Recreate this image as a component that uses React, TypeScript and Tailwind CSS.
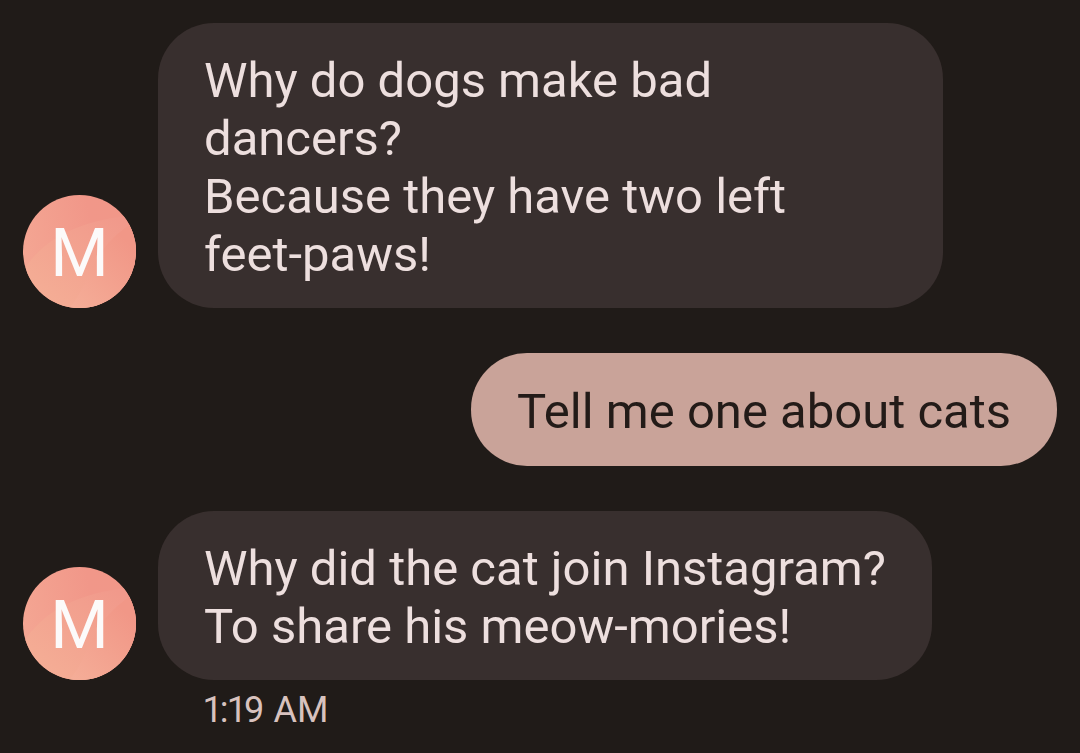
import React from "react";

type Message = { id: number; from: "them" | "me"; lines: string[]; time?: string };

const messages: Message[] = [
  { id: 1, from: "them", lines: ["Why do dogs make bad dancers?", "Because they have two left feet-paws!"] },
  { id: 2, from: "me", lines: ["Tell me one about cats"] },
  { id: 3, from: "them", lines: ["Why did the cat join Instagram?", "To share his meow-mories!"], time: "1:19 AM" },
];

// Hyphenated words stay whole, so lines break only at spaces.
function Line({ text }: { text: string }) {
  return (
    <p>
      {text.split(" ").map((word, i) => (
        <React.Fragment key={i}>
          {i > 0 && " "}
          {word.includes("-") ? <span className="whitespace-nowrap">{word}</span> : word}
        </React.Fragment>
      ))}
    </p>
  );
}

function Avatar({ id }: { id: number }) {
  const base = `avatar-base-${id}`;
  const swoop = `avatar-swoop-${id}`;
  const petal = `avatar-petal-${id}`;
  return (
    <div className="grid size-[113px] shrink-0 place-items-center overflow-hidden rounded-full">
      <svg viewBox="0 0 113 113" className="col-start-1 row-start-1 size-full" aria-hidden="true">
        <defs>
          <linearGradient id={base} x1="0" y1="0.6" x2="1" y2="0.4">
            <stop offset="0" stopColor="#f4a693" />
            <stop offset="0.65" stopColor="#f19789" />
            <stop offset="1" stopColor="#f19788" />
          </linearGradient>
          <linearGradient id={swoop} x1="0" y1="1" x2="0.9" y2="0.1">
            <stop offset="0" stopColor="#f5b197" />
            <stop offset="1" stopColor="#f1998b" />
          </linearGradient>
          <linearGradient id={petal} gradientUnits="userSpaceOnUse" x1="46" y1="113" x2="108" y2="50">
            <stop offset="0" stopColor="#f5ae98" />
            <stop offset="1" stopColor="#f19787" />
          </linearGradient>
        </defs>
        <rect width="113" height="113" fill={`url(#${base})`} />
        <path d="M0 76C20 44 55 25 113 20V113H0Z" fill={`url(#${swoop})`} />
        <path d="M46 113C66 94 66 52 113 26V113Z" fill={`url(#${petal})`} />
      </svg>
      <span className="col-start-1 row-start-1 pt-1 text-[67px] leading-none text-[#fcfafa]">M</span>
    </div>
  );
}

function Incoming({ message }: { message: Message }) {
  return (
    <li className="grid grid-cols-[113px_minmax(0,1fr)] items-end gap-x-[22px]">
      <Avatar id={message.id} />
      <div className="w-fit max-w-[785px] rounded-[56px] bg-[#382f2e] px-[46px] pt-[29px] pb-[24px] text-[#eddfde]">
        {message.lines.map((line) => (
          <Line key={line} text={line} />
        ))}
      </div>
      {message.time && (
        <time className="col-start-2 pt-[8px] pl-[46px] text-[36px] leading-[44px] text-[#d8c2be] proportional-nums">
          {message.time}
        </time>
      )}
    </li>
  );
}

function Outgoing({ message }: { message: Message }) {
  return (
    <li className="flex justify-end">
      <div className="rounded-[56px] bg-[#c9a399] px-[46px] pt-[30px] pb-[25px] text-[#231b18]">
        {message.lines.map((line) => (
          <Line key={line} text={line} />
        ))}
      </div>
    </li>
  );
}

export default function App() {
  return (
    <main className="min-h-screen bg-[#201b18] px-[23px] pt-[23px] font-['Roboto',sans-serif] text-[49px] leading-[58px]">
      <ul className="flex flex-col gap-[45px]">
        {messages.map((message) =>
          message.from === "me" ? (
            <Outgoing key={message.id} message={message} />
          ) : (
            <Incoming key={message.id} message={message} />
          ),
        )}
      </ul>
    </main>
  );
}
